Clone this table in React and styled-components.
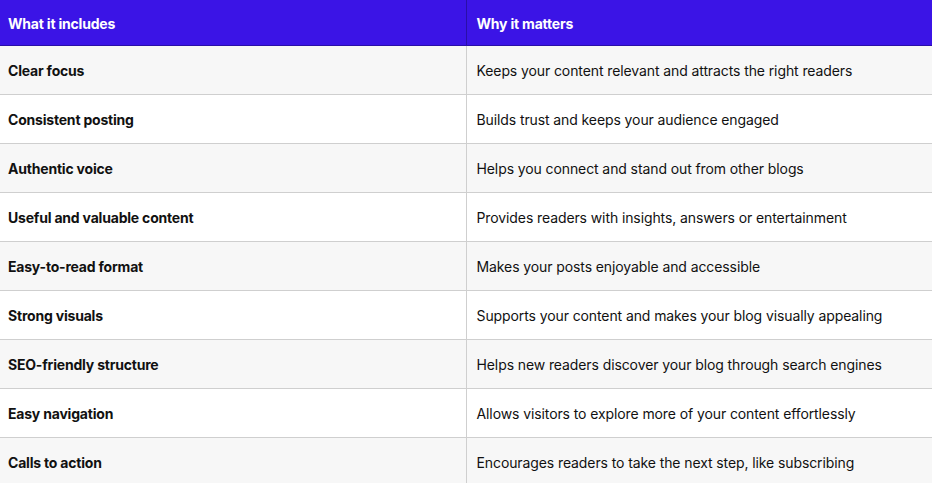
import React from "react";
import styled, { createGlobalStyle } from "styled-components";

const Global = createGlobalStyle`
  html, body { margin: 0; padding: 0; background: #ffffff; }
  body { font-family: Inter, "Noto Sans", sans-serif; }
`;

const Table = styled.table`
  width: 932px;
  border-collapse: collapse;
  table-layout: fixed;
  font-size: 14px;
  color: #111111;
`;

const HeadCell = styled.th`
  height: 45px;
  box-sizing: border-box;
  padding: 2px ${(p) => (p.$right ? "10px" : "8px")} 0;
  text-align: left;
  background: #3b14e6;
  color: #ffffff;
  font-weight: 700;
  letter-spacing: -0.2px;
  border-bottom: 1px solid #2a0fa8;
  border-left: ${(p) => (p.$right ? "1px solid #2a0fa8" : "none")};
  width: ${(p) => (p.$right ? "auto" : "466px")};
`;

const Row = styled.tr`
  background: ${(p) => (p.$alt ? "#f7f7f7" : "#ffffff")};
`;

const Cell = styled.td`
  height: 49px;
  box-sizing: border-box;
  padding: 2px ${(p) => (p.$right ? "10px" : "8px")} 0;
  border-bottom: 1px solid #cfcfcf;
  border-left: ${(p) => (p.$right ? "1px solid #cfcfcf" : "none")};
  font-weight: ${(p) => (p.$right ? 400 : 700)};
  letter-spacing: ${(p) => (p.$right ? "-0.1px" : "-0.2px")};
  white-space: nowrap;
`;

const rows = [
  ["Clear focus", "Keeps your content relevant and attracts the right readers"],
  ["Consistent posting", "Builds trust and keeps your audience engaged"],
  ["Authentic voice", "Helps you connect and stand out from other blogs"],
  ["Useful and valuable content", "Provides readers with insights, answers or entertainment"],
  ["Easy-to-read format", "Makes your posts enjoyable and accessible"],
  ["Strong visuals", "Supports your content and makes your blog visually appealing"],
  ["SEO-friendly structure", "Helps new readers discover your blog through search engines"],
  ["Easy navigation", "Allows visitors to explore more of your content effortlessly"],
  ["Calls to action", "Encourages readers to take the next step, like subscribing"],
];

export default function App() {
  return (
    <>
      <Global />
      <Table>
        <thead>
          <tr>
            <HeadCell>What it includes</HeadCell>
            <HeadCell $right>Why it matters</HeadCell>
          </tr>
        </thead>
        <tbody>
          {rows.map(([a, b], i) => (
            <Row key={a} $alt={i % 2 === 0}>
              <Cell>{a}</Cell>
              <Cell $right>{b}</Cell>
            </Row>
          ))}
        </tbody>
      </Table>
    </>
  );
}
